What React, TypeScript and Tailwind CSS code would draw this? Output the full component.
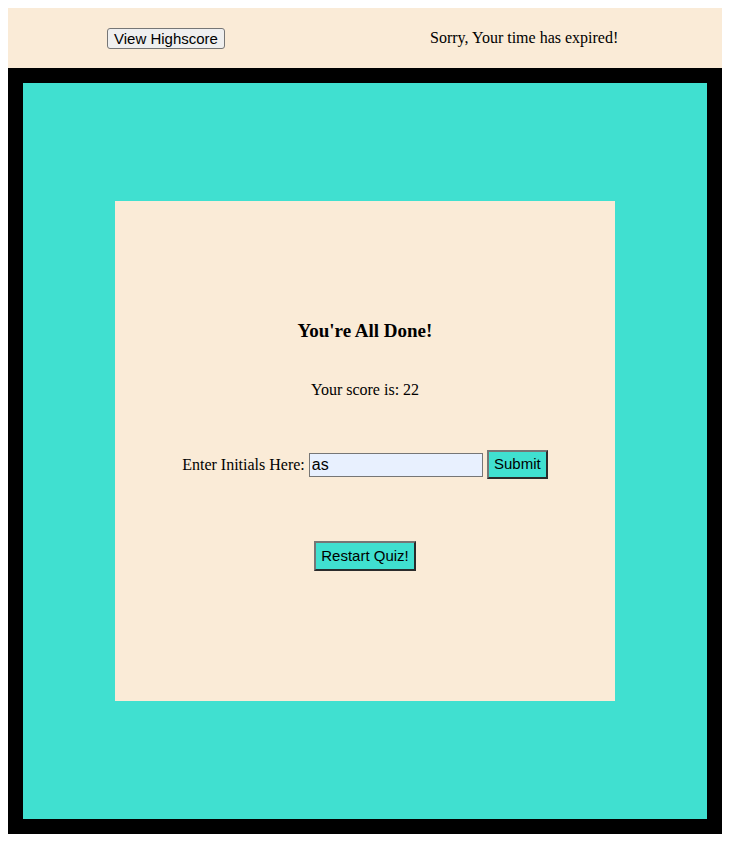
import React from 'react';

const QuizDone = () => {
  return (
    <div className="w-[500px] h-[500px] bg-[#faebd7] flex flex-col items-center pt-[119px] font-['Liberation_Serif',serif] text-black">
      <h3 className="text-[19px] leading-[22px] font-bold">You're All Done!</h3>
      <p className="mt-[39px] text-[16px] leading-[18px]">Your score is: 22</p>
      <div className="mt-[51px] flex items-center h-[29px] text-[16px]">
        <span>Enter Initials Here:</span>
        <input
          defaultValue="as"
          className="ml-[4px] w-[174px] h-[24px] border border-[#767676] bg-[#e8f0fe] px-[2px] text-[16px] font-['Liberation_Sans',sans-serif] outline-none"
        />
        <button className="ml-[4px] w-[61px] h-[29px] bg-[#40e0d0] border-2 border-t-[#767676] border-l-[#767676] border-b-[#2b2b2b] border-r-[#2b2b2b] text-[15px] font-['Liberation_Sans',sans-serif]">
          Submit
        </button>
      </div>
      <button className="mt-[62px] w-[102px] h-[30px] bg-[#40e0d0] border-2 border-t-[#767676] border-l-[#767676] border-b-[#2b2b2b] border-r-[#2b2b2b] text-[15px] font-['Liberation_Sans',sans-serif]">
        Restart Quiz!
      </button>
    </div>
  );
};

const App = () => {
  return (
    <div className="bg-white p-[8px] w-[730px] h-[842px]">
      <header className="h-[60px] bg-[#faebd7] flex items-center pl-[99px]">
        <button className="w-[118px] h-[21px] bg-[#efefef] border border-[#767676] rounded-[3px] text-[15px] leading-[17px] text-black font-['Liberation_Sans',sans-serif]">
          View Highscore
        </button>
        <span className="ml-[205px] -mt-[1px] text-[16px] font-['Liberation_Serif',serif] text-black">
          Sorry, Your time has expired!
        </span>
      </header>
      <main className="bg-black p-[15px]">
        <div className="bg-[#40e0d0] h-[736px] flex items-center justify-center">
          <QuizDone />
        </div>
      </main>
    </div>
  );
};

export default App;
